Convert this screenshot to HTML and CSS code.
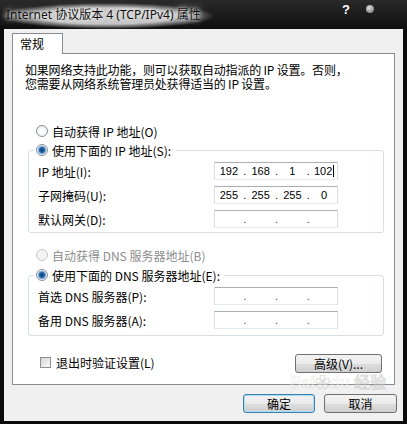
FILE: index.html
```html
<!DOCTYPE html>
<html lang="zh-CN">
<head>
  <meta charset="UTF-8" />
  <title>Internet 协议版本 4 (TCP/IPv4) 属性</title>
  <link rel="stylesheet" href="styles.css">
</head>
<body>
  <div class="window">
    <div class="titlebar">
      <span class="title">Internet 协议版本 4 (TCP/IPv4) 属性</span>
      <span class="help">?</span>
      <span class="close-dot"></span>
    </div>

    <div class="client">
      <div class="tabs"><div class="tab">常规</div></div>

      <div class="panel">
        <p class="desc">如果网络支持此功能，则可以获取自动指派的 IP 设置。否则，<br>您需要从网络系统管理员处获得适当的 IP 设置。</p>

        <div class="radio-row first"><span class="radio"></span>自动获得 IP 地址(O)</div>
        <div class="group">
          <div class="group-head"><span class="radio checked"></span>使用下面的 IP 地址(S):</div>
          <div class="rows">
            <div class="field-row">
              <span class="label">IP 地址(I):</span>
              <span class="ipbox"><span class="oct">192</span><span class="dot">.</span><span class="oct">168</span><span class="dot">.</span><span class="oct">1</span><span class="dot">.</span><span class="oct"><span class="cur">102</span></span></span>
            </div>
            <div class="field-row">
              <span class="label">子网掩码(U):</span>
              <span class="ipbox"><span class="oct">255</span><span class="dot">.</span><span class="oct">255</span><span class="dot">.</span><span class="oct">255</span><span class="dot">.</span><span class="oct">0</span></span>
            </div>
            <div class="field-row">
              <span class="label">默认网关(D):</span>
              <span class="ipbox empty"><span class="oct"></span><span class="dot">.</span><span class="oct"></span><span class="dot">.</span><span class="oct"></span><span class="dot">.</span><span class="oct"></span></span>
            </div>
          </div>
        </div>

        <div class="radio-row second disabled"><span class="radio"></span>自动获得 DNS 服务器地址(B)</div>
        <div class="group dns">
          <div class="group-head"><span class="radio checked"></span>使用下面的 DNS 服务器地址(E):</div>
          <div class="rows">
            <div class="field-row">
              <span class="label">首选 DNS 服务器(P):</span>
              <span class="ipbox empty"><span class="oct"></span><span class="dot">.</span><span class="oct"></span><span class="dot">.</span><span class="oct"></span><span class="dot">.</span><span class="oct"></span></span>
            </div>
            <div class="field-row">
              <span class="label">备用 DNS 服务器(A):</span>
              <span class="ipbox empty"><span class="oct"></span><span class="dot">.</span><span class="oct"></span><span class="dot">.</span><span class="oct"></span><span class="dot">.</span><span class="oct"></span></span>
            </div>
          </div>
        </div>

        <div class="bottom-row">
          <div class="check-row"><span class="check"></span>退出时验证设置(L)</div>
          <button class="btn advanced">高级(V)...</button>
        </div>
      </div>

      <div class="actions">
        <button class="btn default">确定</button>
        <button class="btn">取消</button>
      </div>
    </div>

    <!-- watermark from the source screenshot -->
    <div class="watermark">Bai<span class="paw">&#10047;</span>du 经验</div>
  </div>
</body>
</html>
```

FILE: styles.css
```css
* {
  box-sizing: border-box;
}
body {
  margin: 0;
  background: #000;
  font-family: "Noto Sans CJK SC", sans-serif;
  font-size: 12px;
  color: #000;
}
.window {
  position: relative;
  width: 407px;
  height: 424px;
  background: #0b0b0b;
  display: flex;
  flex-direction: column;
  overflow: hidden;
}

/* title bar */
.titlebar {
  height: 29px;
  flex: none;
  display: flex;
  align-items: flex-start;
  background: linear-gradient(#2a2a2a, #161616 70%, #0e0e0e);
}
.title {
  height: 29px;
  margin-right: auto;
  padding: 7px 14px 0 6px;
  line-height: 16px;
  font-family: "Noto Sans", "Noto Sans CJK SC", sans-serif;
  font-size: 12px;
  color: #111;
  background: radial-gradient(ellipse closest-side at 50% 55%, rgba(205,205,205,0.95) 62%, rgba(205,205,205,0) 100%);
  text-shadow: 0 0 4px #fff, 0 0 8px rgba(255,255,255,0.8);
}
.help {
  margin-top: 2px;
  line-height: 16px;
  color: #fff;
  font-family: "Liberation Sans", sans-serif;
  font-weight: bold;
  font-size: 13px;
  margin-right: 16px;
}
.close-dot {
  width: 8px;
  height: 8px;
  margin-top: 5px;
  margin-right: 33px;
  border-radius: 50%;
  background: radial-gradient(circle at 40% 35%, #e0e0e0, #8a8a8a 70%, #555);
}

/* dialog body */
.client {
  flex: 1;
  margin: 0 4px 3px 4px;
  padding: 4px 6px 0 8px;
  background: #f0f0f0;
}
.tabs {
  height: 20px;
}
.tab {
  position: relative;
  z-index: 1;
  width: 51px;
  height: 21px;
  padding: 2px 0 0 7px;
  line-height: 16px;
  border: 1px solid #898c95;
  border-bottom: none;
  background: #fff;
}
.panel {
  width: 383px;
  height: 332px;
  border: 1px solid #898c95;
  background: #fff;
  padding-left: 12px;
}
.desc {
  margin: 9px 0 0;
  line-height: 14px;
  letter-spacing: -0.2px;
}

/* radios */
.radio-row {
  display: flex;
  align-items: center;
  gap: 4px;
  height: 14px;
  margin-left: 11px;
}
.radio-row.first {
  margin-top: 33px;
}
.radio-row.second {
  margin-top: 15px;
}
.radio-row.disabled {
  color: #8d8d8d;
}
.radio {
  flex: none;
  width: 12px;
  height: 12px;
  border-radius: 50%;
  border: 1px solid #8b9097;
  background: radial-gradient(circle at 50% 55%, #fdfdfd 30%, #dfe3e8);
}
.disabled .radio {
  border-color: #c4c7cb;
  background: #f4f4f4;
}
.radio.checked {
  background: radial-gradient(circle at 50% 50%, #0d3b6e 0, #2a67a8 2.5px, #6aa2d8 3.5px, #e3ebf3 4.5px, #f7f7f7 6px);
}

/* group boxes */
.group {
  width: 356px;
  margin: 12px 0 0 3px;
  padding: 0 0 4px 9px;
  border: 1px solid #d5dfe5;
  border-radius: 3px;
}
.group.dns {
  margin-top: 13px;
  padding-bottom: 6px;
}
.group-head {
  display: flex;
  align-items: center;
  gap: 4px;
  width: fit-content;
  height: 14px;
  margin: -8px 0 0 -4px;
  padding: 0 4px 0 2px;
  background: #fff;
}
.rows {
  display: flex;
  flex-direction: column;
  gap: 6px;
  margin-top: 5px;
}
.field-row {
  display: flex;
  align-items: center;
  height: 18px;
}
.label {
  width: 176px;
}
.ipbox {
  display: flex;
  align-items: center;
  width: 124px;
  height: 18px;
  padding-left: 1px;
  border: 1px solid #e3e9ef;
  border-top-color: #abadb3;
  border-left-color: #dbdfe6;
  border-right-color: #dbdfe6;
  font-family: "Liberation Sans", sans-serif;
  font-size: 11px;
}
.oct {
  width: 26px;
  text-align: center;
}
.dot {
  width: 6px;
  text-align: center;
}
.empty .dot {
  color: #444;
}
.cur {
  border-right: 1px solid #000;
  padding-right: 1px;
}

/* bottom of the tab */
.bottom-row {
  display: flex;
  justify-content: space-between;
  align-items: flex-start;
  margin: 18px 12px 0 15px;
}
.check-row {
  display: flex;
  align-items: center;
  gap: 5px;
  height: 14px;
  margin-top: 1px;
}
.check {
  width: 11px;
  height: 11px;
  border: 1px solid #8e8f8f;
  background: linear-gradient(135deg, #d6d6d6, #fafafa);
}

/* buttons */
.btn {
  height: 19px;
  padding: 0;
  border: 1px solid #707070;
  border-radius: 3px;
  background: linear-gradient(#f2f2f2 0%, #ebebeb 50%, #dddddd 51%, #cfcfcf 100%);
  font-family: "Noto Sans CJK SC", sans-serif;
  font-size: 12px;
  line-height: 17px;
  color: #000;
}
.btn.advanced {
  width: 87px;
}
.actions {
  display: flex;
  justify-content: flex-end;
  gap: 9px;
  padding-top: 9px;
}
.actions .btn {
  width: 73px;
}
.btn.default {
  width: 72px;
  border-color: #3c7fb1;
  box-shadow: inset 0 0 0 1px #a9dcf6;
}

.watermark {
  position: absolute;
  left: 290px;
  top: 374px;
  font-family: "Liberation Sans", sans-serif;
  font-size: 16px;
  font-weight: bold;
  line-height: 18px;
  color: rgba(255,255,255,0.4);
  -webkit-text-stroke: 0.5px rgba(160,160,160,0.35);
  pointer-events: none;
}
.watermark .paw {
  font-size: 15px;
}
```
